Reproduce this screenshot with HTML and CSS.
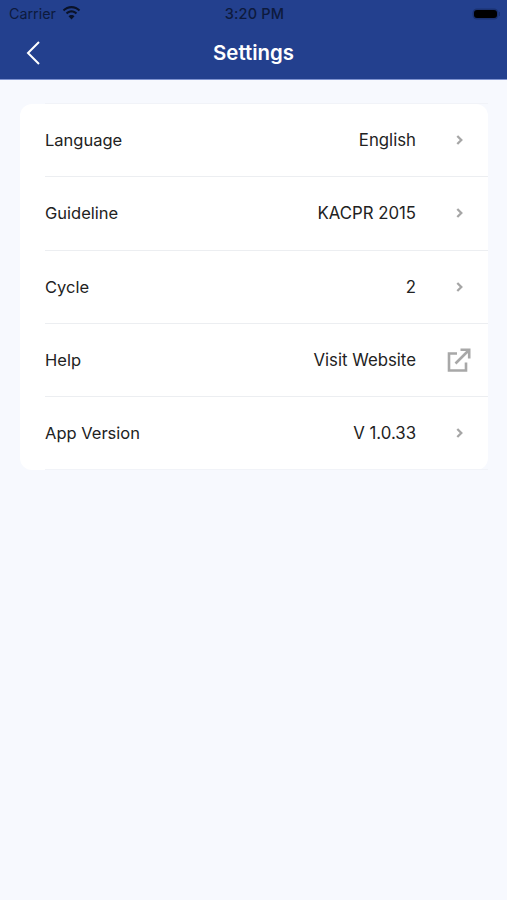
FILE: index.html
```html
<!DOCTYPE html>
<html lang="en">
<head>
	<meta charset="UTF-8">
	<title>Settings</title>
	<link rel="stylesheet" href="styles.css">
</head>
<body>
	<div class="header">
		<div class="status">
			<div class="carrier">
				<span>Carrier</span>
				<svg class="wifi" width="19" height="14" viewBox="0 0 19 14"><path d="M9.5 2.2c2.8 0 5.4 1.1 7.3 3l1.4-1.5C15.900 1.400 12.800 0 9.500 0S3.100 1.400.8 3.700l1.400 1.500c1.900-1.900 4.500-3 7.300-3z"/><path d="M9.500 6.500c1.600 0 3.100.6 4.200 1.700l1.500-1.500C13.700 5.200 11.700 4.300 9.500 4.300s-4.200.9-5.700 2.400l1.500 1.500c1.100-1.100 2.600-1.700 4.200-1.700z"/><path d="M9.500 13.500l3-3.200c-.8-.8-1.800-1.300-3-1.300s-2.200.5-3 1.300z"/></svg>
			</div>
			<div class="clock">3:20 PM</div>
			<div class="battery"><span class="battery-fill"></span><span class="battery-tip"></span></div>
		</div>
		<div class="nav">
			<svg class="back" width="16" height="26" viewBox="0 0 16 26"><path d="M14 2L3 13l11 11" fill="none" stroke="#fff" stroke-width="2"/></svg>
			<h1>Settings</h1>
		</div>
	</div>
	<div class="content">
		<ul class="card">
			<li class="row">
				<span class="label">Language</span>
				<span class="value">English</span>
				<span class="side"><svg class="chevron" width="7" height="10" viewBox="0 0 7 10"><path d="M1.300 1L5.300 5l-4 4"/></svg></span>
			</li>
			<li class="row">
				<span class="label">Guideline</span>
				<span class="value">KACPR 2015</span>
				<span class="side"><svg class="chevron" width="7" height="10" viewBox="0 0 7 10"><path d="M1.300 1L5.300 5l-4 4"/></svg></span>
			</li>
			<li class="row">
				<span class="label">Cycle</span>
				<span class="value">2</span>
				<span class="side"><svg class="chevron" width="7" height="10" viewBox="0 0 7 10"><path d="M1.300 1L5.300 5l-4 4"/></svg></span>
			</li>
			<li class="row">
				<span class="label">Help</span>
				<span class="value">Visit Website</span>
				<span class="side"><svg class="external" width="24" height="24" viewBox="0 0 24 24"><path d="M10 5.500H2v17h17v-8"/><path d="M8.500 15.500L22 2M13.500 1.800h8.700v8.700"/></svg></span>
			</li>
			<li class="row">
				<span class="label">App Version</span>
				<span class="value">V 1.0.33</span>
				<span class="side"><svg class="chevron" width="7" height="10" viewBox="0 0 7 10"><path d="M1.300 1L5.300 5l-4 4"/></svg></span>
			</li>
		</ul>
	</div>
</body>
</html>
```

FILE: styles.css
```css
html,body{
	margin: 0;
	padding: 0;
}
body{
	height: 900px;
	overflow: hidden;
	background-color: #f7f9fe;
	font-family: "Inter", "Liberation Sans", sans-serif;
	color: #222;
}
.header{
	height: 80px;
	box-sizing: border-box;
	background-color: #23408e;
	border-bottom: 1px solid #7f93d0;
}
.status{
	height: 27px;
	padding: 0 7px 0 9px;
	display: flex;
	align-items: center;
	justify-content: space-between;
	font-size: 14.300px;
	color: #0d1a3d;
}
.carrier{
	width: 120px;
	display: flex;
	align-items: center;
	gap: 6px;
}
.wifi{
	fill: #0a1228;
	margin-top: -2px;
}
.clock{
	font-size: 14.500px;
	font-weight: 500;
	letter-spacing: .2px;
}
.battery{
	width: 120px;
	display: flex;
	justify-content: flex-end;
	align-items: center;
}
.battery-fill{
	width: 23px;
	height: 8px;
	border-radius: 3px;
	background-color: #000;
	box-shadow: 0 0 0 1.500px #1b3272;
}
.battery-tip{
	width: 1px;
	height: 4px;
	margin-left: 2px;
	background-color: #1b3272;
}
.nav{
	height: 52px;
	position: relative;
	display: flex;
	align-items: center;
	justify-content: center;
}
.nav h1{
	margin: 0 0 2px;
	font-size: 20.400px;
	font-weight: 600;
	color: #fff;
}
.back{
	position: absolute;
	left: 25px;
	top: 13px;
}
.content{
	padding: 24px 19px 0 20px;
}
.card{
	list-style: none;
	margin: 0;
	padding: 0;
	background-color: #fff;
	border-radius: 12px;
}
.row{
	height: 73.250px;
	box-sizing: border-box;
	margin-left: 25px;
	padding-right: 17px;
	display: flex;
	align-items: center;
	border-bottom: 1px solid #eceef1;
	font-size: 16.500px;
}
.row:first-child{
	box-shadow: 0 -1px 0 #f1f3f8;
}
.row:last-child{
	border-bottom-color: #f1f3f8;
}
.label{
	flex: 1;
}
.value{
	font-size: 16.800px;
}
.side{
	width: 55px;
	display: flex;
	justify-content: flex-end;
	align-items: center;
}
.chevron{
	margin-right: 8px;
	fill: none;
	stroke: #a6a6a6;
	stroke-width: 2.300;
}
.external{
	fill: none;
	stroke: #a8a8a8;
	stroke-width: 2.600;
}
```
